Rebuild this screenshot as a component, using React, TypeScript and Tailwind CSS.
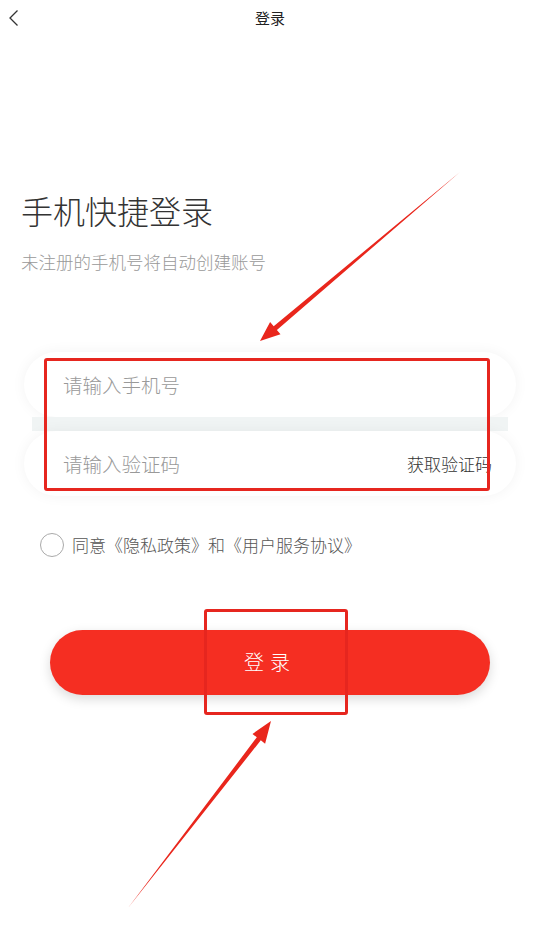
import React, { useState } from 'react';

const font = { fontFamily: '"Noto Sans CJK SC", "Noto Sans", sans-serif' };

const App: React.FC = () => {
  const [agreed, setAgreed] = useState(false);

  return (
    <div className="relative w-[544px] h-[952px] bg-white overflow-hidden" style={font}>
      {/* nav bar */}
      <div className="grid grid-cols-[60px_1fr_60px] items-center h-[36px]">
        <svg width="12" height="18" viewBox="0 0 12 18" className="ml-[8px]">
          <path d="M9.5 1.5 L2 9 L9.5 16.5" fill="none" stroke="#333" strokeWidth="1.3" />
        </svg>
        <div className="text-center text-[15px] text-[#222] pr-[4px]">登录</div>
        <div />
      </div>

      {/* heading */}
      <div className="px-[21px] pt-[152px]">
        <h1 className="text-[32px] font-light leading-[44px] text-[#333]">手机快捷登录</h1>
        <p className="mt-[17px] text-[17.5px] font-light leading-[26px] text-[#999]">未注册的手机号将自动创建账号</p>
      </div>

      {/* inputs */}
      <div className="ml-[24px] mr-[28px] mt-[77px] flex flex-col">
        <div className="h-[65px] rounded-full bg-white shadow-[0_0_14px_rgba(0,0,0,0.05)] flex items-center px-[39px]">
          <span className="text-[19.5px] font-light text-[#999]">请输入手机号</span>
        </div>
        <div className="h-[14px] mx-[8px] bg-[#f0f4f4]" />
        <div className="h-[65px] rounded-full bg-white shadow-[0_0_14px_rgba(0,0,0,0.05)] flex items-center justify-between pl-[39px] pr-[24px]">
          <span className="text-[19.5px] font-light text-[#999]">请输入验证码</span>
          <span className="text-[17px] font-light text-[#333]">获取验证码</span>
        </div>
      </div>

      {/* agreement */}
      <div className="mt-[36px] ml-[40px] flex items-center gap-[8px]" onClick={() => setAgreed(!agreed)}>
        <div className={`w-[24px] h-[24px] rounded-full border-[1.5px] ${agreed ? 'border-[#f52e22] bg-[#f52e22]' : 'border-[#aaa]'}`} />
        <span className="text-[17px] font-light text-[#555]">同意《隐私政策》和《用户服务协议》</span>
      </div>

      {/* login button */}
      <div className="ml-[50px] mr-[54px] mt-[72px]">
        <button className="w-full h-[65px] rounded-full bg-[#f52e22] shadow-[0_4px_12px_rgba(0,0,0,0.15)] text-white text-[20px] tracking-[6px] font-light">
          登录
        </button>
      </div>

      {/* annotation boxes */}
      <div className="absolute left-[44px] top-[358px] w-[446px] h-[133px] border-[3px] border-[#e6261f] rounded-[3px]" />
      <div className="absolute left-[204px] top-[609px] w-[144px] h-[106px] border-[3px] border-[#e6261f] rounded-[3px]" />

      {/* annotation arrows */}
      <svg className="absolute left-0 top-0" width="544" height="952" viewBox="0 0 544 952">
        <polygon points="460,172 276.9,330 280.5,334.2 260,341 270.1,322 273.7,326.2" fill="#e9261c" />
        <polygon points="128,908 256.8,737.3 252.5,733.9 271,721 265.1,743.7 260.8,740.3" fill="#e9261c" />
      </svg>
    </div>
  );
};

export default App;
